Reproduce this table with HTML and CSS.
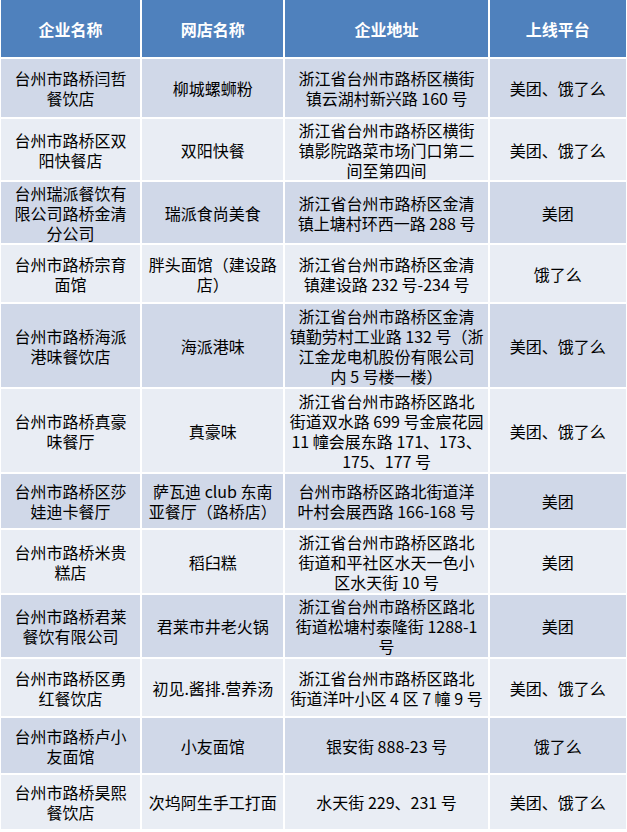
FILE: index.html
```html
<!DOCTYPE html>
<html lang="zh-CN">
<head>
<meta charset="utf-8">
<title>企业名单</title>
<link rel="stylesheet" href="styles.css">
</head>
<body>
<table class="list">
  <colgroup>
    <col class="c1"><col class="c2"><col class="c3"><col class="c4">
  </colgroup>
  <thead>
    <tr class="h57 head">
      <th>企业名称</th><th>网店名称</th><th>企业地址</th><th>上线平台</th>
    </tr>
  </thead>
  <tbody>
    <tr class="h58 odd">
      <td>台州市路桥闫哲<br>餐饮店</td><td>柳城螺蛳粉</td><td>浙江省台州市路桥区横街<br>镇云湖村新兴路 160 号</td><td>美团、饿了么</td>
    </tr>
    <tr class="h61 even">
      <td>台州市路桥区双<br>阳快餐店</td><td>双阳快餐</td><td>浙江省台州市路桥区横街<br>镇影院路菜市场门口第二<br>间至第四间</td><td>美团、饿了么</td>
    </tr>
    <tr class="h61 odd">
      <td>台州瑞派餐饮有<br>限公司路桥金清<br>分公司</td><td>瑞派食尚美食</td><td>浙江省台州市路桥区金清<br>镇上塘村环西一路 288 号</td><td>美团</td>
    </tr>
    <tr class="h57 even">
      <td>台州市路桥宗育<br>面馆</td><td>胖头面馆（建设路<br>店）</td><td>浙江省台州市路桥区金清<br>镇建设路 232 号-234 号</td><td>饿了么</td>
    </tr>
    <tr class="h83 odd">
      <td>台州市路桥海派<br>港味餐饮店</td><td>海派港味</td><td>浙江省台州市路桥区金清<br>镇勤劳村工业路 132 号（浙<br>江金龙电机股份有限公司<br>内 5 号楼一楼）</td><td>美团、饿了么</td>
    </tr>
    <tr class="h83 even">
      <td>台州市路桥真豪<br>味餐厅</td><td>真豪味</td><td>浙江省台州市路桥区路北<br>街道双水路 699 号金宸花园<br>11 幢会展东路 171、173、<br>175、177 号</td><td>美团、饿了么</td>
    </tr>
    <tr class="h54 odd">
      <td>台州市路桥区莎<br>娃迪卡餐厅</td><td>萨瓦迪 club 东南<br>亚餐厅（路桥店）</td><td>台州市路桥区路北街道洋<br>叶村会展西路 166-168 号</td><td>美团</td>
    </tr>
    <tr class="h63 even">
      <td>台州市路桥米贵<br>糕店</td><td>稻臼糕</td><td>浙江省台州市路桥区路北<br>街道和平社区水天一色小<br>区水天街 10 号</td><td>美团</td>
    </tr>
    <tr class="h62 odd">
      <td>台州市路桥君莱<br>餐饮有限公司</td><td>君莱市井老火锅</td><td>浙江省台州市路桥区路北<br>街道松塘村泰隆街 1288-1<br>号</td><td>美团</td>
    </tr>
    <tr class="h57 even">
      <td>台州市路桥区勇<br>红餐饮店</td><td>初见.酱排.营养汤</td><td>浙江省台州市路桥区路北<br>街道洋叶小区 4 区 7 幢 9 号</td><td>美团、饿了么</td>
    </tr>
    <tr class="h55 odd">
      <td>台州市路桥卢小<br>友面馆</td><td>小友面馆</td><td>银安街 888-23 号</td><td>饿了么</td>
    </tr>
    <tr class="h54 even">
      <td>台州市路桥昊熙<br>餐饮店</td><td>次坞阿生手工打面</td><td>水天街 229、231 号</td><td>美团、饿了么</td>
    </tr>
  </tbody>
</table>
</body>
</html>
```
FILE: styles.css
```css
html, body {
  margin: 0;
  padding: 0;
  background: #ffffff;
}

body {
  font-family: "Noto Sans CJK SC", "Noto Sans", sans-serif;
  font-size: 16px;
  line-height: 20px;
  color: #000000;
  overflow: hidden;
}

.list {
  table-layout: fixed;
  border-collapse: separate;
  border-spacing: 2px;
  width: 629px;
  margin: -2px 0 0 -1px;
  background: #ffffff;
}

.c1 { width: 139px; }
.c2 { width: 141px; }
.c3 { width: 202px; }
.c4 { width: 136px; }

.list th,
.list td {
  padding: 0;
  text-align: center;
  vertical-align: middle;
  white-space: nowrap;
  overflow: visible;
}

.head th {
  background: #4f81bd;
  color: #ffffff;
  font-weight: bold;
  font-size: 16px;
}

.odd td { background: #d0d8e8; }
.even td { background: #e9edf4; }

.h54 { height: 54px; }
.h55 { height: 55px; }
.h57 { height: 57px; }
.h58 { height: 58px; }
.h61 { height: 61px; }
.h62 { height: 62px; }
.h63 { height: 63px; }
.h83 { height: 83px; }
```
